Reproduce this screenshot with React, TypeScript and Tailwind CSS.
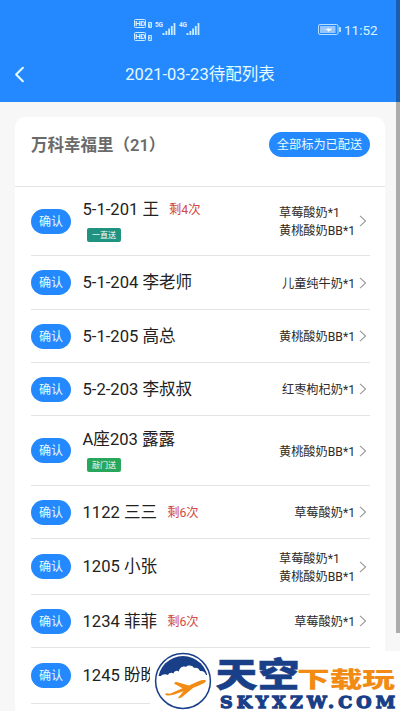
import { ChevronLeft } from 'lucide-react'
import { clsx } from 'clsx'

type Delivery = {
  room: string
  name: string
  left?: number
  tag?: string
  tagClass?: string
  goods: string[]
  rowClass: string
}

const DELIVERIES: Delivery[] = [
  { room: '5-1-201', name: '王', left: 4, tag: '一直送', tagClass: 'bg-[#209280]', goods: ['草莓酸奶*1', '黄桃酸奶BB*1'], rowClass: 'h-[69px]' },
  { room: '5-1-204', name: '李老师', goods: ['儿童纯牛奶*1'], rowClass: 'h-[54px]' },
  { room: '5-1-205', name: '高总', goods: ['黄桃酸奶BB*1'], rowClass: 'h-[53px]' },
  { room: '5-2-203', name: '李叔叔', goods: ['红枣枸杞奶*1'], rowClass: 'h-[53px]' },
  { room: 'A座203', name: '露露', tag: '敲门送', tagClass: 'bg-[#28a65b]', goods: ['黄桃酸奶BB*1'], rowClass: 'h-[70px]' },
  { room: '1122', name: '三三', left: 6, goods: ['草莓酸奶*1'], rowClass: 'h-[53px]' },
  { room: '1205', name: '小张', goods: ['草莓酸奶*1', '黄桃酸奶BB*1'], rowClass: 'h-[56px]' },
  { room: '1234', name: '菲菲', left: 6, goods: ['草莓酸奶*1'], rowClass: 'h-[53px]' },
  { room: '1245', name: '盼盼', goods: [], rowClass: 'h-[56px]' },
]

function HdBadge({ sim }: { sim: number }) {
  return (
    <div className="flex h-[9px] items-end gap-[2px]">
      <span className="flex h-[9px] w-[12px] items-center justify-center rounded-[1.5px] border border-[#c9ecff] text-[8px] font-bold leading-none tracking-tighter">HD</span>
      <span className="flex h-[6px] w-[4px] items-center justify-center rounded-[1px] bg-[#c9ecff] text-[5px] font-bold leading-none text-[#2489fe]">{sim}</span>
    </div>
  )
}

function Signal({ label }: { label: string }) {
  return (
    <div className="flex h-[14px] w-[21px] items-start">
      <span className="w-[7px] text-[6.5px] font-bold leading-[7px] tracking-tighter">{label}</span>
      <svg className="mt-px h-[12px] w-[14px] shrink-0" viewBox="0 0 14 12" fill="#c9ecff">
        <rect x="0.5" y="10" width="2" height="2" />
        <rect x="3.5" y="8" width="1.8" height="4" />
        <rect x="6.2" y="5.5" width="1.8" height="6.5" />
        <rect x="8.9" y="3" width="1.8" height="9" />
        <rect x="11.6" y="0" width="1.8" height="12" />
      </svg>
    </div>
  )
}

function StatusBar() {
  return (
    <div className="flex h-[46px] items-start pl-[134px] text-[#d9f3ff]">
      <div className="mt-[19px] flex flex-col gap-1">
        <HdBadge sim={1} />
        <HdBadge sim={2} />
      </div>
      <div className="ml-[3px] mt-[22px] flex gap-[3px]">
        <Signal label="5G" />
        <Signal label="4G" />
      </div>
      <svg className="ml-[118px] mt-[24px] h-[11px] w-[24px] shrink-0" viewBox="0 0 24 11" fill="none">
        <rect x="0.5" y="0.5" width="19.5" height="10" rx="1.5" stroke="#b5e0ff" />
        <rect x="2" y="2" width="15.5" height="7" fill="#93c5ff" />
        <path d="M5.5 5.5h3.5l1.2-2.2.5 1.5h3.8l-4.4 3-.5-1.6z" fill="#fff" />
        <rect x="21" y="3" width="2" height="5" rx="0.5" fill="#b5e0ff" />
      </svg>
      <span className="ml-[2px] mt-[21px] text-[13.5px] leading-[18px]">11:52</span>
    </div>
  )
}

function DeliveryRow({ item }: { item: Delivery }) {
  return (
    <li className={clsx('flex shrink-0 items-center border-b border-[#e4e4e4]', item.rowClass)}>
      <button className="h-[25px] w-10 shrink-0 rounded-full bg-[#2489fe] pt-px text-[12px] leading-[24px] text-[#e6fbff]">确认</button>
      <div className="ml-[11.5px] flex flex-1 flex-col">
        <div className={clsx('flex items-center whitespace-nowrap', item.tag ? 'h-[20px]' : 'h-[25px] pt-px')}>
          <span className="text-[16.6px] leading-[24px] text-[#222]">
            {item.room} {item.name}
          </span>
          {item.left ? <span className="ml-[10px] text-[12.3px] leading-4 text-[#cf4a44]">剩{item.left}次</span> : null}
        </div>
        {item.tag ? (
          <span className={clsx('ml-[4.5px] mt-[8px] h-[14px] w-[34px] rounded-[2px] pt-px text-center text-[8px] leading-[13px] text-white', item.tagClass)}>{item.tag}</span>
        ) : null}
      </div>
      <div className="pt-[2px] text-[12.2px] leading-[18px] text-[#2b2b2b]">
        {item.goods.map((name) => (
          <p key={name}>{name}</p>
        ))}
      </div>
      <svg className="ml-[4px] mr-[3px] h-3 w-[8px] shrink-0" viewBox="0 0 8 12" fill="none" stroke="#999" strokeWidth="1.1">
        <path d="M1 0.8 6.6 6 1 11.2" />
      </svg>
    </li>
  )
}

function Watermark() {
  return (
    <div className="absolute bottom-0 right-0 h-[60px] w-[250px] bg-white">
      <svg className="h-[60px] w-[250px]" viewBox="0 0 250 60">
        <clipPath id="sky">
          <circle cx="33" cy="30" r="25" />
        </clipPath>
        <circle cx="33" cy="30" r="27.4" fill="#fff" stroke="#193f88" strokeWidth="1.5" />
        <path
          clipPath="url(#sky)"
          d="M5 0H62V24H56C55 21 53 19.5 50 20C49 17 46 16 44 17C42 14 38 14 36 16C33 14.5 29 17 29 20.5C27 19 24 20 23.5 22.5C21 21 19 22 18 24C15 22.5 12 23.5 11 25H5Z"
          fill="#193f88"
        />
        <path
          d="M15 43C16 41.8 18 42.2 20 42.8L32.5 37.2L24 32.6L25.8 30.8L39 34.4L48.5 30.2C52 28.8 55.5 28.6 56 29.8C56.2 31 53 32.8 49.5 34.2L43 37L31.5 46.6L27.5 47.6L33.5 40.3L23.5 43.8C19.5 45 16 45 15 43Z"
          fill="#f28b13"
        />
        <g fontFamily="'Noto Sans CJK SC', sans-serif" fontWeight="900">
          <text x="65.5" y="36" fontSize="34" textLength="84" lengthAdjust="spacingAndGlyphs" fill="#193f88" stroke="#193f88" strokeWidth="0.5">
            天空
          </text>
          <text x="147" y="35.5" fontSize="22" textLength="98" lengthAdjust="spacingAndGlyphs" fill="#f28b13">
            下载玩
          </text>
        </g>
        <text x="70" y="57" fontFamily="'DejaVu Serif', serif" fontWeight="700" fontSize="17.5" textLength="175" lengthAdjust="spacing" fill="#193f88" stroke="#193f88" strokeWidth="1.3">
          SKYXZW.COM
        </text>
      </svg>
    </div>
  )
}

export default function App() {
  return (
    <div className="relative flex h-[711px] w-[400px] flex-col overflow-hidden bg-[#f7f7f7] font-[Roboto,'Noto_Sans_CJK_SC',sans-serif]">
      <header className="h-[102px] shrink-0 bg-[#2489fe]">
        <StatusBar />
        <div className="grid h-14 grid-cols-[40px_1fr_40px] items-center text-[#e6fbff]">
          <ChevronLeft className="ml-[6px] h-[27px] w-[27px]" strokeWidth={1.8} />
          <h1 className="pt-[2px] text-center text-[16.5px] leading-6">2021-03-23待配列表</h1>
        </div>
      </header>

      <main className="mx-[15px] mt-[15px] flex flex-1 flex-col rounded-t-[10px] bg-white">
        <div className="flex h-[70px] shrink-0 items-start justify-between border-b border-[#e4e4e4] pl-4 pr-[15px]">
          <h2 className="mt-[17px] text-[16.5px] font-semibold leading-6 text-[#6a6a6a]">万科幸福里（21）</h2>
          <button className="mt-[15px] h-[25px] w-[101px] rounded-full bg-[#2489fe] pt-px text-[12.2px] leading-[24px] text-[#e6fbff]">全部标为已配送</button>
        </div>
        <ul className="flex flex-col pl-4 pr-[15px]">
          {DELIVERIES.map((item) => (
            <DeliveryRow key={item.room} item={item} />
          ))}
        </ul>
      </main>

      <div className="absolute right-0 top-0 h-[633px] w-1 bg-black/30" />
      <Watermark />
    </div>
  )
}
